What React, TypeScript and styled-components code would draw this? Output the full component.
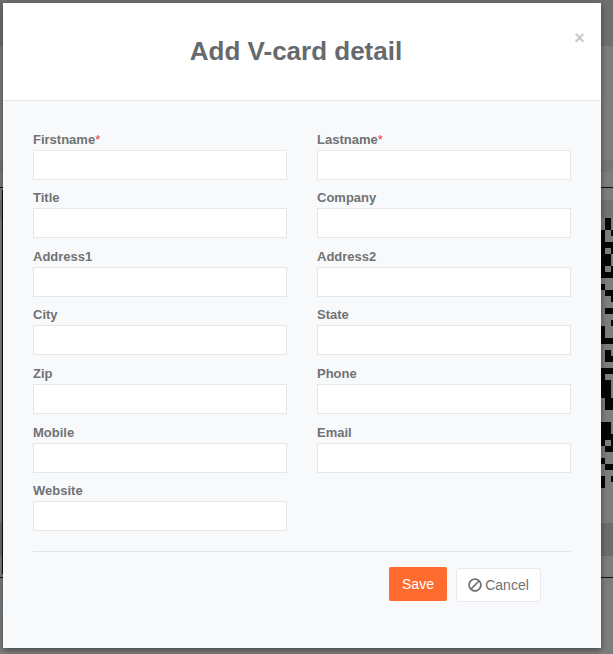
import React from "react";
import styled, { createGlobalStyle } from "styled-components";
import { FaBan } from "react-icons/fa";

const GlobalStyled = createGlobalStyle`
  *, *::after, *::before {
    box-sizing: border-box;
  }

  html, body {
    margin: 0;
    height: 100%;
    overflow: hidden;
  }

  body {
    background-color: #7d7d7d;
    font-family: 'Liberation Sans', Arial, sans-serif;
  }
`;

const Page = styled.div`
  position: relative;
  width: 613px;
  height: 654px;
  padding: 3px;
  overflow: hidden;
  background-color: #7d7d7d;
`;

// the dimmed page behind the modal
const Band = styled.div<{ $top: number; $height: number; $color: string }>`
  position: absolute;
  left: 0;
  right: 0;
  top: ${(p) => p.$top}px;
  height: ${(p) => p.$height}px;
  background-color: ${(p) => p.$color};
`;

const EdgeLine = styled.div`
  position: absolute;
  left: 2px;
  top: 190px;
  width: 1px;
  height: 384px;
  background-color: #111;
`;

const Speck = styled.div`
  position: absolute;
  left: 1px;
  top: 606px;
  width: 2px;
  height: 8px;
  background-color: #6f8594;
`;

const QrStrip = styled.svg`
  position: absolute;
  left: 601px;
  top: 218px;
  display: block;
`;

const Modal = styled.div`
  position: relative;
  width: 598px;
  height: 645px;
  display: flex;
  flex-direction: column;
  background-color: #f8f9fb;
  border-radius: 0 3px 0 0;
  box-shadow: 0 2px 6px rgba(0, 0, 0, 0.45);
`;

const Header = styled.div`
  height: 98px;
  display: flex;
  padding: 0 16px 0 15px;
  background-color: #fff;
  border-bottom: 1px solid #e6e8ea;
`;

const Title = styled.h4`
  flex: 1;
  margin: 0;
  padding-top: 33px;
  text-align: center;
  font-size: 26px;
  line-height: 30px;
  font-weight: 700;
  color: #66696d;
`;

const Close = styled.button`
  width: 11px;
  height: 20px;
  margin-top: 25px;
  padding: 0;
  border: 0;
  background: none;
  font-family: inherit;
  font-size: 18px;
  line-height: 20px;
  font-weight: 700;
  color: #c8c9ca;
`;

const Body = styled.div`
  flex: 1;
  padding: 29.6px 30px 0;
`;

const FormGrid = styled.div`
  display: grid;
  grid-template-columns: 254px 254px;
  column-gap: 30px;
  row-gap: 9.6px;
`;

const Field = styled.div`
  display: flex;
  flex-direction: column;
`;

const Label = styled.label`
  height: 19px;
  font-size: 13px;
  line-height: 18px;
  font-weight: 700;
  color: #707275;
`;

const Required = styled.span`
  color: #f0353b;
  font-weight: 400;
`;

const Input = styled.input`
  width: 100%;
  height: 30px;
  padding: 0 8px;
  background-color: #fff;
  border: 1px solid #e6e7e9;
  outline: none;
`;

const Divider = styled.hr`
  height: 1px;
  margin: 20px 0 15px;
  border: 0;
  background-color: #e3e5e8;
`;

const Footer = styled.div`
  display: flex;
  justify-content: flex-end;
  align-items: flex-start;
  gap: 9px;
  padding-right: 30px;
`;

const SaveButton = styled.button`
  width: 58px;
  height: 34px;
  padding: 0;
  border: 0;
  border-radius: 2px;
  background-color: #ff6a2f;
  color: #fff;
  font-family: inherit;
  font-size: 14px;
`;

const CancelButton = styled.button`
  width: 85px;
  height: 34px;
  margin-top: 1px;
  padding: 0;
  display: flex;
  align-items: center;
  justify-content: center;
  gap: 3px;
  background-color: #fff;
  border: 1px solid #e6e8ec;
  border-radius: 3px;
  color: #707275;
  font-family: inherit;
  font-size: 14px;
`;

// the slash of the reference's icon runs the other way
const BanIcon = styled(FaBan)`
  transform: scaleX(-1);
`;

const fields = [
  { name: "Firstname", required: true },
  { name: "Lastname", required: true },
  { name: "Title" },
  { name: "Company" },
  { name: "Address1" },
  { name: "Address2" },
  { name: "City" },
  { name: "State" },
  { name: "Zip" },
  { name: "Phone" },
  { name: "Mobile" },
  { name: "Email" },
  { name: "Website" },
];

// visible slice of the QR code: A, B, C are the three module columns
const qrRows = [
  ".B.", ".B.", "A.C", "A..", "ABC", "A.C", "AB.", "AB.", "A.C", "ABC",
  "...", "A..", ".BC", "..C", "...", ".BC", "...", "..C", "A..", "A..",
  "ABC", "...", ".B.", ".BC", "...", "ABC", "A..", "AB.", "AB.", "AB.",
  ".BC", ".BC", "...", "...", "AB.", "AB.", "ABC", "A.C", ".BC", "...",
  "A..", ".BC", "...", "A.C", "A..",
];
const qrCols: Record<string, [number, number]> = { A: [0, 4], B: [4, 6], C: [10, 2] };

const App: React.FC = () => {
  return (
    <>
      <GlobalStyled />
      <Page>
        <Band $top={0} $height={46} $color="#6f6f6f" />
        <Band $top={160} $height={12} $color="#767676" />
        <Band $top={187} $height={1} $color="#111" />
        <Band $top={200} $height={18} $color="#737373" />
        <Band $top={523} $height={33} $color="#6c6c6c" />
        <Band $top={577} $height={1} $color="#111" />
        <EdgeLine />
        <Speck />
        <QrStrip width="12" height="270" viewBox="0 0 12 270">
          {qrRows.map((row, y) =>
            row
              .replace(/\./g, "")
              .split("")
              .map((c) => (
                <rect key={`${y}${c}`} x={qrCols[c][0]} y={y * 6} width={qrCols[c][1]} height="6" fill="#050505" />
              ))
          )}
        </QrStrip>
        <Modal>
          <Header>
            <Title>Add V-card detail</Title>
            <Close type="button">×</Close>
          </Header>
          <Body>
            <FormGrid>
              {fields.map((f) => (
                <Field key={f.name}>
                  <Label>
                    {f.name}
                    {f.required && <Required>*</Required>}
                  </Label>
                  <Input type="text" />
                </Field>
              ))}
            </FormGrid>
            <Divider />
            <Footer>
              <SaveButton type="button">Save</SaveButton>
              <CancelButton type="button">
                <BanIcon size={14} />
                Cancel
              </CancelButton>
            </Footer>
          </Body>
        </Modal>
      </Page>
    </>
  );
};

export default App;
